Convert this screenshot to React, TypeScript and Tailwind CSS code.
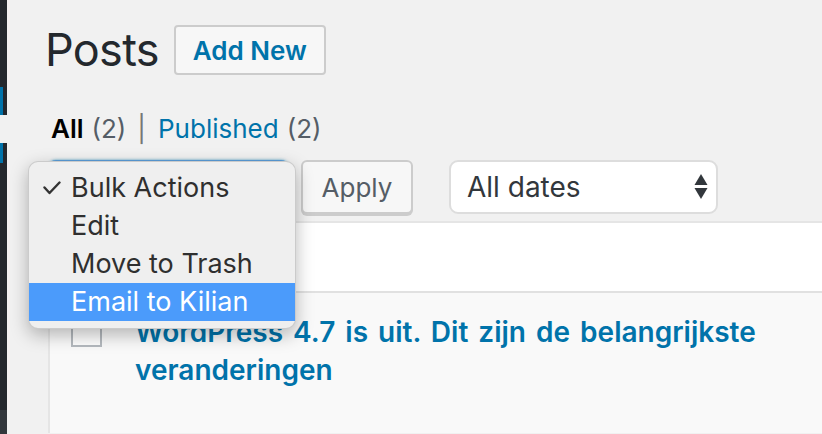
import React from 'react'

const font = "font-['Inter','Liberation_Sans',sans-serif]"

function Sidebar() {
  return (
    <aside className="flex w-[7px] shrink-0 flex-col bg-[#23282d]">
      <div className="h-[87px]" />
      <div className="h-[28px] w-[3px] bg-[#0073aa]" />
      <div className="h-[28px] bg-[#f1f1f1]" />
      <div className="h-[20px] w-[3px] bg-[#0073aa]" />
      <div className="flex-1" />
      <div className="h-[24px] bg-[#32373c]" />
    </aside>
  )
}

function BulkMenu() {
  const items = ['Bulk Actions', 'Edit', 'Move to Trash', 'Email to Kilian']
  return (
    <div className="absolute left-[-20px] top-[1px] z-10 w-[268px] rounded-[10px] border border-black/15 bg-[#efefef] pb-[7px] pt-[7px] shadow-[0_6px_18px_rgba(0,0,0,0.28)]">
      {items.map((item, i) => (
        <div
          key={item}
          className={
            'flex h-[38px] items-center text-[27px] ' +
            (i === 3 ? 'bg-[#4b9bfb] text-white' : 'text-[#2f2f2f]')
          }
        >
          <span className="flex w-[42px] justify-end pr-[10px]">
            {i === 0 && (
              <svg width="18" height="14" viewBox="0 0 18 14" fill="none">
                <polyline
                  points="1.5,6.5 6.5,12 16.5,1.5"
                  stroke="#333"
                  strokeWidth="2.4"
                  strokeLinecap="round"
                  strokeLinejoin="round"
                />
              </svg>
            )}
          </span>
          {item}
        </div>
      ))}
    </div>
  )
}

export default function App() {
  return (
    <div className={`flex h-[434px] w-[822px] overflow-hidden bg-[#f1f1f1] ${font}`}>
      <Sidebar />

      <main className="flex-1 pl-[41px] pt-[25px]">
        {/* titre + bouton */}
        <div className="flex items-center gap-[15px]">
          <h1 className="-ml-[3px] text-[45px] leading-[50px] font-normal text-[#23282d] tracking-[-0.7px]">
            Posts
          </h1>
          <button className="h-[50px] rounded-[4px] border-2 border-[#ccc] bg-[#f7f7f7] px-[17px] text-[26px] font-semibold text-[#0073aa]">
            Add New
          </button>
        </div>

        {/* filtres */}
        <div className="mt-[39px] flex items-center text-[26px] leading-[30px] text-[#555d66]">
          <span className="pl-[3px] font-semibold text-black">All</span>
          <span className="ml-[8px]">(2)</span>
          <span className="ml-[11px] mr-[12px] text-[#777]">|</span>
          <span className="text-[#0073aa]">Published</span>
          <span className="ml-[8px]">(2)</span>
        </div>

        {/* tablenav */}
        <div className="relative mt-[16px] flex h-[54px] items-stretch">
          <div className="w-[241px] rounded-[8px] border-2 border-[#5b9dd9] bg-white shadow-[0_0_3px_rgba(30,140,190,0.8)]" />
          <button className="ml-[12px] w-[112px] rounded-[6px] border-2 border-[#ccc] bg-[#f7f7f7] text-[26px] text-[#555d66] shadow-[0_2px_0_#ccc]">
            Apply
          </button>
          <div className="ml-[36px] flex w-[269px] items-center justify-between rounded-[9px] border-2 border-[#ddd] bg-white pl-[16px] pr-[8px] text-[28px] text-[#32373c]">
            <span>All dates</span>
            <svg width="14" height="26" viewBox="0 0 14 26">
              <polygon points="7,0 13.5,11 0.5,11" fill="#32373c" />
              <polygon points="0.5,14 13.5,14 7,25" fill="#32373c" />
            </svg>
          </div>
          <BulkMenu />
        </div>

        {/* tableau */}
        <div className="mt-[7px] border-l-2 border-t-2 border-[#e5e5e5]">
          <div className="h-[70px] border-b-2 border-[#e1e1e1] bg-white" />
          <div className="flex h-[140px] items-start bg-[#f9f9f9]">
            <div className="ml-[21px] mt-[22px] h-[32px] w-[31px] border-2 border-[#b4b9be] bg-[#fdfdfd]" />
            <div className="ml-[33px] mt-[20px] text-[28px] leading-[38px] font-semibold text-[#0073aa] [word-spacing:3px]">
              <div>WordPress 4.7 is uit. Dit zijn de belangrijkste</div>
              <div>veranderingen</div>
            </div>
          </div>
        </div>
      </main>
    </div>
  )
}
